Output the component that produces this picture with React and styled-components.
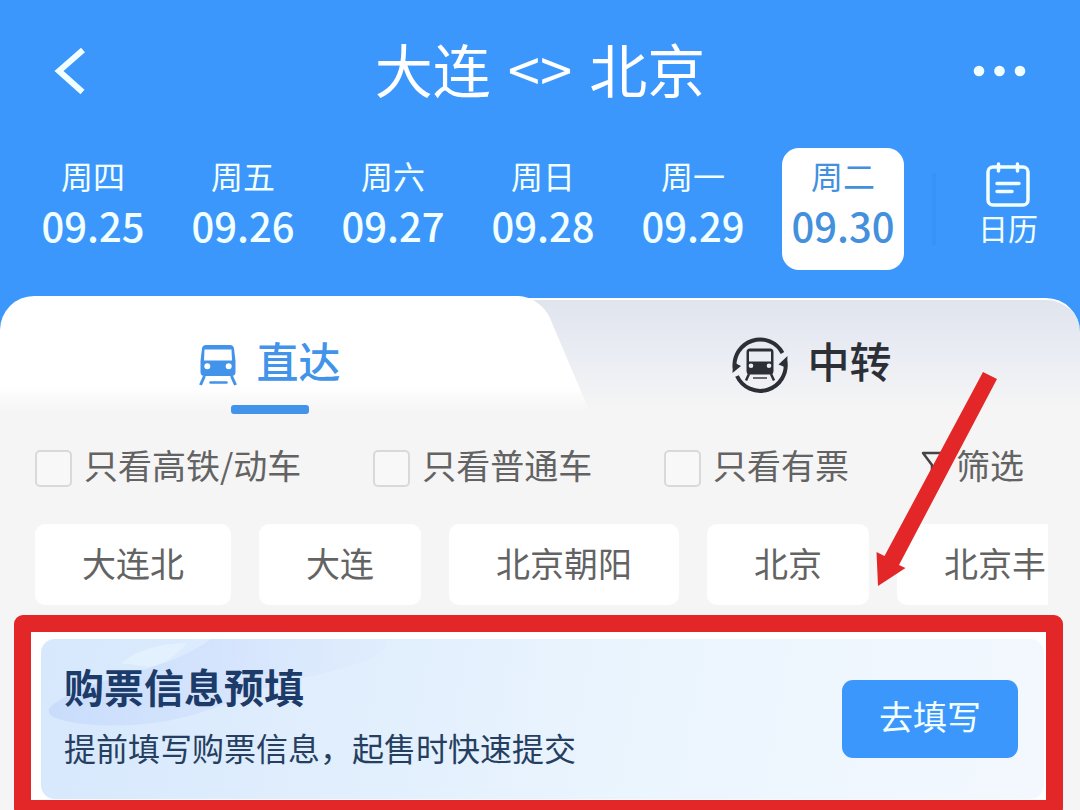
import React from "react";
import styled, { createGlobalStyle } from "styled-components";

const BLUE = "#3b97fc";
const RED = "#e32728";

const GlobalStyle = createGlobalStyle`
  *, *::before, *::after { box-sizing: border-box; }
  body {
    margin: 0;
    background: #f5f5f5;
    font-family: "Noto Sans CJK SC", sans-serif;
  }
  button, input { font: inherit; }
`;

const Page = styled.main`
  position: relative;
  height: 100vh;
  overflow: hidden;
  background: #f5f5f5;
`;

const Header = styled.header`
  background: ${BLUE};
  color: #fff;
  padding-bottom: 26px;
`;

const TitleBar = styled.div`
  display: grid;
  grid-template-columns: 1fr auto 1fr;
  align-items: center;
  height: 142px;
  padding: 0 52px;
`;

const Title = styled.h1`
  display: flex;
  gap: 17px;
  margin: 0;
  padding-bottom: 6px;
  font-size: 58px;
  font-weight: 400;
  line-height: 80px;
  color: #fff;
`;

const IconButton = styled.button`
  display: flex;
  padding: 0;
  border: 0;
  background: none;
  color: inherit;
  justify-self: ${(p) => p.$side};
`;

const DateRow = styled.nav`
  display: grid;
  grid-template-columns: repeat(6, 25fr) 3fr 24fr;
  margin-top: 6px;
  padding-left: 18px;
`;

const DateButton = styled.button`
  justify-self: center;
  display: flex;
  flex-direction: column;
  align-items: center;
  gap: 6px;
  width: 122px;
  height: 122px;
  padding: 7px 0 0;
  border: 0;
  border-radius: 17px;
  background: ${(p) => (p.$active ? "#fff" : "transparent")};
  color: ${(p) => (p.$active ? "#4390dd" : "#f2ffff")};
`;

const Weekday = styled.span`
  font-size: 32px;
  line-height: 40px;
`;

const DateText = styled.span`
  font-size: 40px;
  font-weight: 500;
  line-height: 48px;
`;

const Divider = styled.span`
  justify-self: end;
  align-self: center;
  width: 4px;
  height: 72px;
  background: #3993f6;
`;

const CalendarButton = styled.button`
  display: flex;
  flex-direction: column;
  align-items: center;
  padding: 14px 0 0;
  border: 0;
  background: none;
  color: #f2ffff;
  font-size: 30px;
  line-height: 38px;
`;

const Tabs = styled.div`
  display: grid;
  grid-template-columns: 1fr 1fr;
  height: 134px;
  background: linear-gradient(${BLUE} 40px, #f5f5f5 40px);
`;

const tabFill = "linear-gradient(#fff 90px, #f5f5f5 116px)";

const TabButton = styled.button`
  position: relative;
  display: flex;
  justify-content: center;
  align-items: flex-start;
  gap: 19px;
  padding: 35px 0 0;
  border: 0;
  font-size: 42px;
  font-weight: 500;
  line-height: 58px;
  color: ${(p) => (p.$active ? "#4293ea" : "#2c3036")};
`;

const DirectTab = styled(TabButton)`
  z-index: 1;
  border-radius: 34px 0 0 0;
  background: ${tabFill} 0 0 / 90% 100% no-repeat;

  &::before {
    content: "";
    position: absolute;
    inset: 0 -29px 0 50%;
    z-index: -1;
    border-radius: 0 22px 0 0;
    background: ${tabFill};
    transform: skewX(23deg);
  }

  &::after {
    content: "";
    position: absolute;
    left: 50%;
    bottom: 16px;
    width: 78px;
    height: 9px;
    margin-left: -39px;
    border-radius: 3px;
    background: #4293ea;
  }
`;

const TransferTab = styled(TabButton)`
  margin: 2px 0 0 -40px;
  padding: 31px 0 0 44px;
  border-top: 2px solid #fff;
  border-radius: 0 34px 0 0;
  background: linear-gradient(#e0e4ed, #e9ecf3 50px, #f5f5f5 110px);
`;

const IconSlot = styled.span`
  display: flex;
  align-items: center;
  height: 68px;
`;

const Filters = styled.div`
  display: flex;
  justify-content: space-between;
  align-items: center;
  height: 70px;
  padding: 0 56px 0 35px;
  color: #636363;
  font-size: 34px;
  line-height: 48px;
`;

const CheckLabel = styled.label`
  display: flex;
  align-items: center;
  gap: 12px;
`;

const Checkbox = styled.input`
  appearance: none;
  width: 37px;
  height: 37px;
  margin: 6px 0 0;
  border: 2px solid #d9d9d9;
  border-radius: 5px;
  background: #f8f8f8;
`;

const FilterButton = styled.button`
  display: flex;
  align-items: center;
  gap: 8px;
  padding: 0;
  border: 0;
  background: none;
  color: inherit;
`;

const Stations = styled.div`
  display: flex;
  gap: 28px;
  margin: 24px 32px 10px 35px;
  overflow: hidden;
`;

const Station = styled.button`
  flex: none;
  height: 81px;
  padding: 0 47px 4px;
  border: 0;
  border-radius: 10px;
  background: #fff;
  color: #636363;
  font-size: 34px;
  line-height: 48px;
`;

const Highlight = styled.section`
  margin: 0 17px 0 14px;
  padding: 7px 2px 1px 10px;
  border: 17px solid ${RED};
  border-radius: 9px;
  background: #fff;
`;

const Banner = styled.div`
  position: relative;
  display: flex;
  justify-content: space-between;
  align-items: center;
  height: 160px;
  padding: 0 26px 0 23px;
  border-radius: 14px;
  overflow: hidden;
  background: linear-gradient(100deg, #d7e8fd, #e2effd 35%, #ebf5fe 60%, #f3f8fe);
`;

const BannerArt = styled.svg`
  position: absolute;
  left: 0;
  top: 0;
`;

const BannerText = styled.div`
  position: relative;
  padding-bottom: 10px;
`;

const BannerTitle = styled.h2`
  margin: 0;
  font-size: 40px;
  font-weight: 700;
  line-height: 58px;
  color: #1d3b69;
`;

const BannerNote = styled.p`
  margin: 8px 0 0;
  font-size: 32px;
  line-height: 48px;
  color: #263f60;
`;

const FillButton = styled.button`
  width: 176px;
  height: 78px;
  padding: 0 0 6px;
  border: 0;
  border-radius: 11px;
  background: ${BLUE};
  color: #f2ffff;
  font-size: 34px;
  line-height: 48px;
`;

const Pointer = styled.svg`
  position: absolute;
  left: 870px;
  top: 366px;
  z-index: 2;
  pointer-events: none;
`;

const days = [
  ["周四", "09.25"],
  ["周五", "09.26"],
  ["周六", "09.27"],
  ["周日", "09.28"],
  ["周一", "09.29"],
  ["周二", "09.30"],
];

const filters = ["只看高铁/动车", "只看普通车", "只看有票"];
const stations = ["大连北", "大连", "北京朝阳", "北京", "北京丰"];

function TrainIcon() {
  return (
    <svg width="38" height="48" viewBox="-1 -4 38 48" fill="currentColor" aria-hidden="true">
      <path
        fillRule="evenodd"
        d="M6 0h24q3.500 0 4 3.500L35.500 16v11q0 4-4 4H4.500q-4 0-4-4V16L2 3.500Q2.500 0 6 0ZM4.500 4.500 4 15.500h28L31.500 4.500ZM7.300 18.300a3 3 0 1 0 0 6a3 3 0 1 0 0-6ZM28.700 18.300a3 3 0 1 0 0 6a3 3 0 1 0 0-6Z"
      />
      <path d="M4.500 31 .5 40M31.500 31l4 9" stroke="currentColor" strokeWidth="3" />
      <path d="M10.500 37.500h16" stroke="currentColor" strokeWidth="2.500" strokeLinecap="round" />
    </svg>
  );
}

function TransferIcon() {
  return (
    <svg width="56" height="56" viewBox="0 0 56 56" fill="none" stroke="currentColor" aria-hidden="true">
      <path d="M2.700 31A25.500 25.500 0 0 1 50.500 16" strokeWidth="4" />
      <path d="M53.300 24A25.500 25.500 0 0 1 5 39" strokeWidth="4" />
      <path d="M.5 36 9 29 1 25ZM55.500 19 46.500 27.500 55 31Z" fill="currentColor" stroke="none" />
      <path
        fill="currentColor"
        stroke="none"
        fillRule="evenodd"
        d="M18 11.500h20q3.500 0 3.500 3.500V34q0 3.500-3.500 3.500H18q-3.500 0-3.500-3.500V15q0-3.500 3.500-3.500ZM17 14.500V24.500h22V14.500ZM19 26.500a2.300 2.300 0 1 0 0 4.600a2.300 2.300 0 1 0 0-4.600ZM37 26.500a2.300 2.300 0 1 0 0 4.600a2.300 2.300 0 1 0 0-4.600Z"
      />
      <path d="M17 37 14 43.500M39 37l3 6.500" strokeWidth="2.500" />
      <path d="M21 41h14" strokeWidth="2" strokeOpacity=".7" />
    </svg>
  );
}

export default function App() {
  return (
    <Page>
      <GlobalStyle />
      <Header>
        <TitleBar>
          <IconButton $side="start" aria-label="返回">
            <svg width="36" height="48" viewBox="0 0 36 48" fill="none" stroke="#f2ffff" strokeWidth="6">
              <path d="M31 3 7 24l23.500 21" />
            </svg>
          </IconButton>
          <Title>
            <span>大连</span>
            <span>&lt;&gt;</span>
            <span>北京</span>
          </Title>
          <IconButton $side="end" aria-label="更多">
            <svg width="56" height="12" viewBox="0 0 56 12" fill="#f2ffff">
              <circle cx="7" cy="6" r="5.300" />
              <circle cx="27.500" cy="6" r="5.300" />
              <circle cx="48" cy="6" r="5.300" />
            </svg>
          </IconButton>
        </TitleBar>
        <DateRow>
          {days.map(([weekday, date], i) => (
            <DateButton key={date} $active={i === 5}>
              <Weekday>{weekday}</Weekday>
              <DateText>{date}</DateText>
            </DateButton>
          ))}
          <Divider />
          <CalendarButton>
            <svg width="46" height="46" viewBox="0 0 46 46" fill="none" stroke="currentColor" strokeWidth="3.500" strokeLinecap="round">
              <rect x="3" y="5" width="40" height="38" rx="5" />
              <path d="M13.500 2v7M32.500 2v7M12 21.500h22M12 29.500h15" />
            </svg>
            日历
          </CalendarButton>
        </DateRow>
      </Header>

      <Tabs>
        <DirectTab $active>
          <IconSlot>
            <TrainIcon />
          </IconSlot>
          直达
        </DirectTab>
        <TransferTab>
          <IconSlot>
            <TransferIcon />
          </IconSlot>
          中转
        </TransferTab>
      </Tabs>

      <Filters>
        {filters.map((name) => (
          <CheckLabel key={name}>
            <Checkbox type="checkbox" />
            {name}
          </CheckLabel>
        ))}
        <FilterButton>
          <svg width="27" height="30" viewBox="0 0 27 30" fill="none" stroke="#444" strokeWidth="2.500" strokeLinejoin="round">
            <path d="M2 3h23l-9 12v12l-5-3.500V15Z" />
          </svg>
          筛选
        </FilterButton>
      </Filters>

      <Stations>
        {stations.map((name) => (
          <Station key={name}>{name}</Station>
        ))}
      </Stations>

      <Highlight>
        <Banner>
          <BannerArt width="420" height="100" viewBox="0 0 420 100" aria-hidden="true">
            <defs>
              <linearGradient id="cloud">
                <stop offset="0" stopColor="#c4d9fa" stopOpacity=".75" />
                <stop offset=".5" stopColor="#cfdffd" stopOpacity=".6" />
                <stop offset="1" stopColor="#dce8fd" stopOpacity=".3" />
              </linearGradient>
            </defs>
            <path d="M170 0H345C350 30 250 34 190 62S60 90 25 82 15 62 40 50 130 30 170 0Z" fill="url(#cloud)" />
            <path d="M80 24Q105 4 146 4 130 24 108 28Z" fill="#ecf6ff" opacity=".5" />
          </BannerArt>
          <BannerText>
            <BannerTitle>购票信息预填</BannerTitle>
            <BannerNote>提前填写购票信息，起售时快速提交</BannerNote>
          </BannerText>
          <FillButton>去填写</FillButton>
        </Banner>
      </Highlight>

      <Pointer width="132" height="224" viewBox="0 0 132 224" aria-hidden="true">
        <path d="M113 6 127 13 29 199 35.500 202 8 220 6.500 186 14.500 190Z" fill={RED} />
      </Pointer>
    </Page>
  );
}
